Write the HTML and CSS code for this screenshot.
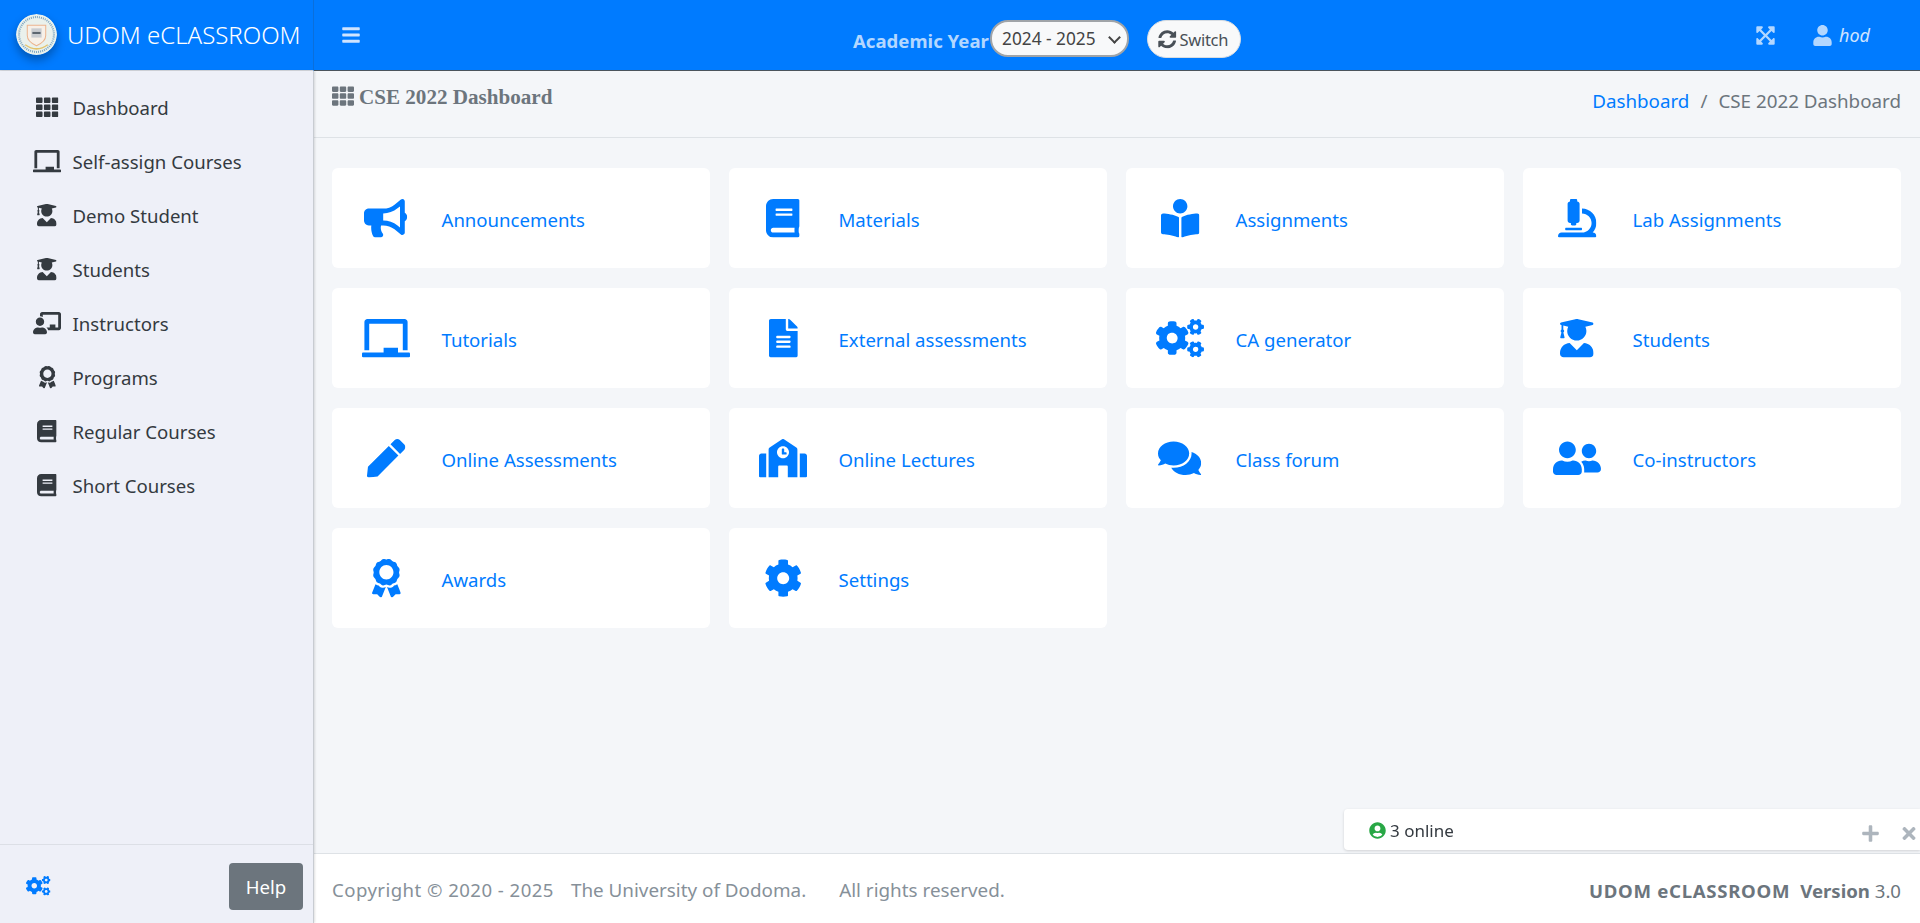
FILE: index.html
```html
<!DOCTYPE html>
<html lang="en">
<head>
<meta charset="utf-8">
<title>UDOM eCLASSROOM</title>
<link rel="stylesheet" href="styles.css">
</head>
<body>
<svg class="defs" aria-hidden="true">
<symbol id="th" viewBox="0 0 512 512"><path d="M149.333 56v80c0 13.255-10.745 24-24 24H24c-13.255 0-24-10.745-24-24V56c0-13.255 10.745-24 24-24h101.333c13.255 0 24 10.745 24 24zm181.334 240v-80c0-13.255-10.745-24-24-24H205.333c-13.255 0-24 10.745-24 24v80c0 13.255 10.745 24 24 24h101.333c13.256 0 24.001-10.745 24.001-24zm32-240v80c0 13.255 10.745 24 24 24H488c13.255 0 24-10.745 24-24V56c0-13.255-10.745-24-24-24H386.667c-13.255 0-24 10.745-24 24zm-32 80V56c0-13.255-10.745-24-24-24H205.333c-13.255 0-24 10.745-24 24v80c0 13.255 10.745 24 24 24h101.333c13.256 0 24.001-10.745 24.001-24zm-205.334 56H24c-13.255 0-24 10.745-24 24v80c0 13.255 10.745 24 24 24h101.333c13.255 0 24-10.745 24-24v-80c0-13.255-10.745-24-24-24zM0 376v80c0 13.255 10.745 24 24 24h101.333c13.255 0 24-10.745 24-24v-80c0-13.255-10.745-24-24-24H24c-13.255 0-24 10.745-24 24zm386.667-56H488c13.255 0 24-10.745 24-24v-80c0-13.255-10.745-24-24-24H386.667c-13.255 0-24 10.745-24 24v80c0 13.255 10.745 24 24 24zm0 160H488c13.255 0 24-10.745 24-24v-80c0-13.255-10.745-24-24-24H386.667c-13.255 0-24 10.745-24 24v80c0 13.255 10.745 24 24 24zM181 376v80c0 13.255 10.745 24 24 24h102c13.255 0 24-10.745 24-24v-80c0-13.255-10.745-24-24-24H205c-13.255 0-24 10.745-24 24z"/></symbol>
<symbol id="bullhorn" viewBox="0 0 576 512"><path d="M576 240c0-23.63-12.95-44.04-32-55.12V32.01C544 23.26 537.02 0 512 0c-7.12 0-14.19 2.38-19.98 7.02l-85.03 68.03C364.28 109.19 310.66 128 256 128H64c-35.35 0-64 28.65-64 64v96c0 35.35 28.65 64 64 64h33.7c-1.39 10.48-2.18 21.14-2.18 32 0 39.77 9.26 77.35 25.56 110.94 5.19 10.69 16.52 17.06 28.4 17.06h74.28c26.05 0 41.69-29.84 25.9-50.56-16.4-21.52-26.15-48.36-26.15-77.44 0-11.11 1.62-21.79 4.41-32H256c54.66 0 108.28 18.81 150.98 52.95l85.03 68.03a32.023 32.023 0 0 0 19.98 7.02c24.92 0 32-22.78 32-32V295.13C563.05 284.04 576 263.63 576 240zm-96 141.42l-33.05-26.44C392.95 311.78 325.12 288 256 288v-96c69.12 0 136.95-23.78 190.95-66.98L480 98.58v282.84z"/></symbol>
<symbol id="book" viewBox="0 0 448 512"><path d="M448 360V24c0-13.3-10.7-24-24-24H96C43 0 0 43 0 96v320c0 53 43 96 96 96h328c13.3 0 24-10.7 24-24v-16c0-7.5-3.5-14.3-8.9-18.7-4.2-15.4-4.2-59.3 0-74.7 5.4-4.3 8.9-11.1 8.9-18.6zM128 134c0-3.3 2.7-6 6-6h212c3.3 0 6 2.7 6 6v20c0 3.3-2.7 6-6 6H134c-3.3 0-6-2.7-6-6v-20zm0 64c0-3.3 2.7-6 6-6h212c3.3 0 6 2.7 6 6v20c0 3.3-2.7 6-6 6H134c-3.3 0-6-2.7-6-6v-20zm253.4 250H96c-17.7 0-32-14.3-32-32 0-17.6 14.4-32 32-32h285.4c-1.9 17.1-1.9 46.9 0 64z"/></symbol>
<symbol id="reader" viewBox="0 0 512 512"><path d="M352 96c0-53.02-42.98-96-96-96s-96 42.98-96 96 42.98 96 96 96 96-42.98 96-96zM233.59 241.1c-59.33-36.32-155.43-46.3-203.79-49.05C13.55 191.13 0 203.51 0 219.14v222.8c0 14.33 11.59 26.28 26.49 27.05 43.66 2.29 131.99 10.68 193.04 41.43 9.37 4.72 20.48-1.71 20.48-11.87V252.56c-.01-4.67-2.32-8.95-6.42-11.46zm248.61-49.05c-48.35 2.74-144.46 12.73-203.78 49.05-4.1 2.51-6.41 6.96-6.41 11.63v245.79c0 10.19 11.14 16.63 20.54 11.9 61.04-30.72 149.32-39.11 192.97-41.4 14.9-.78 26.49-12.73 26.49-27.06V219.14c-.01-15.63-13.56-28.01-29.81-27.09z"/></symbol>
<symbol id="microscope" viewBox="0 0 512 512"><path d="M160 320h12v16c0 8.84 7.16 16 16 16h40c8.84 0 16-7.16 16-16v-16h12c17.67 0 32-14.33 32-32V64c0-17.67-14.33-32-32-32V16c0-8.84-7.16-16-16-16h-64c-8.84 0-16 7.16-16 16v16c-17.67 0-32 14.33-32 32v224c0 17.67 14.33 32 32 32zm304 128h-1.29C493.24 413.99 512 369.2 512 320c0-105.88-86.12-192-192-192v64c70.58 0 128 57.42 128 128s-57.42 128-128 128H48c-26.51 0-48 21.49-48 48 0 8.84 7.16 16 16 16h480c8.84 0 16-7.16 16-16 0-26.51-21.49-48-48-48zm-360-32h208c4.42 0 8-3.58 8-8v-16c0-4.42-3.58-8-8-8H104c-4.42 0-8 3.58-8 8v16c0 4.42 3.58 8 8 8z"/></symbol>
<symbol id="chalkboard" viewBox="0 0 640 512"><path d="M96 64h448v352h64V40c0-22.06-17.94-40-40-40H72C49.94 0 32 17.94 32 40v376h64V64zm528 384H480v-64H288v64H16c-8.84 0-16 7.16-16 16v32c0 8.84 7.16 16 16 16h608c8.84 0 16-7.16 16-16v-32c0-8.84-7.16-16-16-16z"/></symbol>
<symbol id="file" viewBox="0 0 384 512"><path d="M224 136V0H24C10.7 0 0 10.7 0 24v464c0 13.3 10.7 24 24 24h336c13.3 0 24-10.7 24-24V160H248c-13.2 0-24-10.8-24-24zm64 236c0 6.6-5.4 12-12 12H108c-6.6 0-12-5.4-12-12v-8c0-6.6 5.4-12 12-12h168c6.6 0 12 5.4 12 12v8zm0-64c0 6.6-5.4 12-12 12H108c-6.6 0-12-5.4-12-12v-8c0-6.6 5.4-12 12-12h168c6.6 0 12 5.4 12 12v8zm0-72v8c0 6.6-5.4 12-12 12H108c-6.6 0-12-5.4-12-12v-8c0-6.6 5.4-12 12-12h168c6.6 0 12 5.4 12 12zm96-114.1v6.1H256V0h6.1c6.4 0 12.5 2.5 17 7l97.9 98c4.5 4.5 7 10.6 7 16.9z"/></symbol>
<symbol id="cogs" viewBox="0 0 640 512"><path d="M512.1 191l-8.2 14.3c-3 5.3-9.4 7.5-15.1 5.4-11.8-4.4-22.6-10.7-32.1-18.6-4.6-3.8-5.8-10.5-2.8-15.7l8.2-14.3c-6.9-8-12.3-17.3-15.9-27.4h-16.5c-6 0-11.2-4.3-12.2-10.3-2-12-2.1-24.6 0-37.1 1-6 6.2-10.4 12.2-10.4h16.5c3.6-10.1 9-19.4 15.9-27.4l-8.2-14.3c-3-5.2-1.9-11.9 2.8-15.7 9.5-7.9 20.4-14.2 32.1-18.6 5.7-2.1 12.1.1 15.1 5.4l8.2 14.3c10.5-1.9 21.2-1.9 31.7 0L552 6.3c3-5.3 9.4-7.5 15.1-5.4 11.8 4.4 22.6 10.7 32.1 18.6 4.6 3.8 5.8 10.5 2.8 15.7l-8.2 14.3c6.9 8 12.3 17.3 15.9 27.4h16.5c6 0 11.2 4.3 12.2 10.3 2 12 2.1 24.6 0 37.1-1 6-6.2 10.4-12.2 10.4h-16.5c-3.6 10.1-9 19.4-15.9 27.4l8.2 14.3c3 5.2 1.9 11.9-2.8 15.7-9.5 7.9-20.4 14.2-32.1 18.6-5.7 2.1-12.1-.1-15.1-5.4l-8.2-14.3c-10.4 1.9-21.2 1.9-31.7 0zm-10.5-58.8c38.5 29.6 82.4-14.3 52.8-52.8-38.5-29.7-82.4 14.3-52.8 52.8zM386.3 286.1l33.7 16.8c10.1 5.8 14.5 18.1 10.5 29.1-8.9 24.2-26.4 46.4-42.6 65.8-7.4 8.9-20.2 11.1-30.3 5.3l-29.1-16.8c-16 13.7-34.6 24.6-54.9 31.7v33.6c0 11.6-8.3 21.6-19.7 23.6-24.6 4.2-50.4 4.4-75.9 0-11.5-2-20-11.9-20-23.6V418c-20.3-7.2-38.9-18-54.9-31.7L74 403c-10 5.8-22.9 3.6-30.3-5.3-16.2-19.4-33.3-41.6-42.2-65.7-4-10.9.4-23.2 10.5-29.1l33.3-16.8c-3.9-20.9-3.9-42.4 0-63.4L12 205.8c-10.1-5.8-14.6-18.1-10.5-29 8.9-24.2 26-46.4 42.2-65.8 7.4-8.9 20.2-11.1 30.3-5.3l29.1 16.8c16-13.7 34.6-24.6 54.9-31.7V57.1c0-11.5 8.2-21.5 19.6-23.5 24.6-4.2 50.5-4.4 76-.1 11.5 2 20 11.9 20 23.6v33.6c20.3 7.2 38.9 18 54.9 31.7l29.1-16.8c10-5.8 22.9-3.6 30.3 5.3 16.2 19.4 33.2 41.6 42.1 65.8 4 10.9.1 23.2-10 29.1l-33.7 16.8c3.9 21 3.9 42.5 0 63.5zm-117.6 21.1c59.2-77-28.7-164.9-105.7-105.7-59.2 77 28.7 164.9 105.7 105.7zm243.4 182.7l-8.2 14.3c-3 5.3-9.4 7.5-15.1 5.4-11.8-4.4-22.6-10.7-32.1-18.6-4.6-3.8-5.8-10.5-2.8-15.7l8.2-14.3c-6.9-8-12.3-17.3-15.9-27.4h-16.5c-6 0-11.2-4.3-12.2-10.3-2-12-2.1-24.6 0-37.1 1-6 6.2-10.4 12.2-10.4h16.5c3.6-10.1 9-19.4 15.9-27.4l-8.2-14.3c-3-5.2-1.9-11.9 2.8-15.7 9.5-7.9 20.4-14.2 32.1-18.6 5.7-2.1 12.1.1 15.1 5.4l8.2 14.3c10.5-1.9 21.2-1.9 31.7 0l8.2-14.3c3-5.3 9.4-7.5 15.1-5.4 11.8 4.4 22.6 10.7 32.1 18.6 4.6 3.8 5.8 10.5 2.8 15.7l-8.2 14.3c6.9 8 12.3 17.3 15.9 27.4h16.5c6 0 11.2 4.3 12.2 10.3 2 12 2.1 24.6 0 37.1-1 6-6.2 10.4-12.2 10.4h-16.5c-3.6 10.1-9 19.4-15.9 27.4l8.2 14.3c3 5.2 1.9 11.9-2.8 15.7-9.5 7.9-20.4 14.2-32.1 18.6-5.7 2.1-12.1-.1-15.1-5.4l-8.2-14.3c-10.4 1.9-21.2 1.9-31.7 0zM501.6 431c38.5 29.6 82.4-14.3 52.8-52.8-38.5-29.6-82.4 14.3-52.8 52.8z"/></symbol>
<symbol id="graduate" viewBox="0 0 448 512"><path d="M319.4 320.6L224 416l-95.4-95.4C57.1 323.7 0 382.2 0 454.4v9.6c0 26.5 21.5 48 48 48h352c26.5 0 48-21.5 48-48v-9.6c0-72.2-57.1-130.7-128.6-133.8zM13.6 79.8l6.4 1.5v58.4c-7 4.2-12 11.5-12 20.3 0 8.4 4.6 15.4 11.1 19.7L3.5 242c-1.7 6.9 2.1 14 7.6 14h41.8c5.5 0 9.3-7.1 7.6-14l-15.6-62.3C51.4 175.4 56 168.4 56 160c0-8.8-5-16.1-12-20.3V87.1l66 15.9c-8.6 17.2-14 36.4-14 57 0 70.7 57.3 128 128 128s128-57.3 128-128c0-20.6-5.3-39.8-14-57l96.3-23.2c18.2-4.4 18.2-27.1 0-31.5l-190.4-46c-13-3.1-26.7-3.1-39.7 0L13.6 48.2c-18.1 4.4-18.1 27.2 0 31.6z"/></symbol>
<symbol id="pen" viewBox="0 0 512 512"><path d="M290.74 93.24l128.02 128.02-277.99 277.99-114.14 12.6C11.35 513.54-1.56 500.62.14 485.34l12.7-114.22 277.9-277.88zm207.2-19.06l-60.11-60.11c-18.75-18.75-49.16-18.75-67.91 0l-56.55 56.55 128.02 128.02 56.55-56.55c18.75-18.76 18.75-49.16 0-67.91z"/></symbol>
<symbol id="school" viewBox="0 0 640 512"><path d="M0 224v272c0 8.84 7.16 16 16 16h80V192H32c-17.67 0-32 14.33-32 32zm360-48h-24v-40c0-4.42-3.58-8-8-8h-16c-4.42 0-8 3.58-8 8v64c0 4.42 3.58 8 8 8h48c4.42 0 8-3.58 8-8v-16c0-4.42-3.58-8-8-8zm137.75-63.96l-160-106.67a32.02 32.02 0 0 0-35.5 0l-160 106.67A32.002 32.002 0 0 0 128 138.66V512h128V368c0-8.84 7.16-16 16-16h96c8.84 0 16 7.16 16 16v144h128V138.67c0-10.7-5.35-20.7-14.25-26.63zM320 256c-44.18 0-80-35.82-80-80s35.82-80 80-80 80 35.82 80 80-35.82 80-80 80zm288-64h-64v320h80c8.84 0 16-7.16 16-16V224c0-17.67-14.33-32-32-32z"/></symbol>
<symbol id="comments" viewBox="0 0 576 512"><path d="M416 192c0-88.4-93.1-160-208-160S0 103.6 0 192c0 34.3 14.1 65.9 38 92-13.4 30.2-35.5 54.2-35.8 54.5-2.2 2.3-2.8 5.7-1.5 8.7S4.8 352 8 352c36.6 0 66.9-12.3 88.7-25 32.2 15.7 70.3 25 111.3 25 114.9 0 208-71.6 208-160zm122 220c23.9-26 38-57.7 38-92 0-66.9-53.5-124.2-129.3-148.1.9 6.6 1.3 13.3 1.3 20.1 0 105.9-107.7 192-240 192-10.8 0-21.3-.8-31.7-1.9C207.8 439.6 281.8 480 368 480c41 0 79.1-9.2 111.3-25 21.8 12.7 52.1 25 88.7 25 3.2 0 6.1-1.9 7.3-4.8 1.3-2.9.7-6.3-1.5-8.7-.3-.3-22.4-24.2-35.8-54.5z"/></symbol>
<symbol id="friends" viewBox="0 0 640 512"><path d="M192 256c61.9 0 112-50.1 112-112S253.9 32 192 32 80 82.1 80 144s50.1 112 112 112zm76.8 32h-8.3c-20.8 10-43.9 16-68.5 16s-47.6-6-68.5-16h-8.3C51.6 288 0 339.6 0 403.2V432c0 26.5 21.5 48 48 48h288c26.5 0 48-21.5 48-48v-28.8c0-63.6-51.6-115.2-115.2-115.2zM480 256c53 0 96-43 96-96s-43-96-96-96-96 43-96 96 43 96 96 96zm48 32h-3.8c-13.9 4.8-28.6 8-44.2 8s-30.3-3.2-44.2-8H432c-20.4 0-39.2 5.9-55.7 15.4 24.4 26.3 39.7 61.2 39.7 99.8v38.4c0 2.2-.5 4.3-.6 6.4H592c26.5 0 48-21.5 48-48 0-61.9-50.1-112-112-112z"/></symbol>
<symbol id="award" viewBox="0 0 384 512"><path d="M97.12 362.63c-8.69-8.69-4.16-6.24-25.12-11.85-9.51-2.55-17.87-7.45-25.43-13.32L1.2 448.7c-4.39 10.77 3.81 22.47 15.43 22.03l52.69-2.01L105.56 507c8 8.44 22.04 5.81 26.43-4.96l52.05-127.62c-10.84 6.04-22.87 9.58-35.31 9.58-19.5 0-37.82-7.59-51.61-21.37zM382.8 448.7l-45.37-111.24c-7.56 5.88-15.92 10.77-25.43 13.32-21.07 5.64-16.45 3.18-25.12 11.85-13.79 13.78-32.12 21.37-51.62 21.37-12.44 0-24.47-3.55-35.31-9.58L252 502.04c4.39 10.77 18.44 13.4 26.43 4.96l36.25-38.28 52.69 2.01c11.62.44 19.82-11.27 15.43-22.03zM263 340c15.28-15.55 17.03-14.21 38.79-20.14 13.89-3.79 24.75-14.84 28.47-28.98 7.48-28.4 5.54-24.97 25.95-45.75 10.17-10.35 14.14-25.44 10.42-39.58-7.47-28.38-7.48-24.42 0-52.83 3.72-14.14-.25-29.23-10.42-39.58-20.41-20.78-18.47-17.36-25.95-45.75-3.72-14.14-14.58-25.19-28.47-28.98-27.88-7.61-24.52-5.62-44.95-26.41-10.17-10.35-25-14.4-38.89-10.61-27.87 7.6-23.98 7.61-51.9 0-13.89-3.79-28.72.25-38.89 10.61-20.41 20.78-17.05 18.8-44.94 26.41-13.89 3.79-24.75 14.84-28.47 28.98-7.47 28.39-5.54 24.97-25.95 45.75-10.17 10.35-14.15 25.44-10.42 39.58 7.47 28.36 7.48 24.4 0 52.82-3.72 14.14.25 29.23 10.42 39.59 20.41 20.78 18.47 17.35 25.95 45.75 3.72 14.14 14.58 25.19 28.47 28.98C104.6 325.96 106.27 325 121 340c13.23 13.47 33.84 15.88 49.74 5.82a39.676 39.676 0 0 1 42.53 0c15.89 10.06 36.5 7.65 49.73-5.82zM97.66 175.96c0-53.03 42.24-96.02 94.34-96.02s94.34 42.99 94.34 96.02-42.24 96.02-94.34 96.02-94.34-42.99-94.34-96.02z"/></symbol>
<symbol id="cog" viewBox="0 0 512 512"><path d="M487.4 315.7l-42.6-24.6c4.3-23.2 4.3-47 0-70.2l42.6-24.6c4.9-2.8 7.1-8.6 5.5-14-11.1-35.6-30-67.8-54.7-94.6-3.8-4.1-10-5.1-14.8-2.3L380.8 110c-17.9-15.4-38.5-27.3-60.8-35.1V25.8c0-5.6-3.9-10.5-9.4-11.7-36.7-8.2-74.3-7.8-109.2 0-5.5 1.2-9.4 6.1-9.4 11.7V75c-22.2 7.9-42.8 19.8-60.8 35.1L88.7 85.5c-4.9-2.8-11-1.9-14.8 2.3-24.7 26.7-43.6 58.9-54.7 94.6-1.7 5.4.6 11.2 5.5 14L67.3 221c-4.3 23.2-4.3 47 0 70.2l-42.6 24.6c-4.9 2.8-7.1 8.6-5.5 14 11.1 35.6 30 67.8 54.7 94.6 3.8 4.1 10 5.1 14.8 2.3l42.6-24.6c17.9 15.4 38.5 27.3 60.8 35.1v49.2c0 5.6 3.9 10.5 9.4 11.7 36.7 8.2 74.3 7.8 109.2 0 5.5-1.2 9.4-6.1 9.4-11.7v-49.2c22.2-7.9 42.8-19.8 60.8-35.1l42.6 24.6c4.9 2.8 11 1.9 14.8-2.3 24.7-26.7 43.6-58.9 54.7-94.6 1.5-5.5-.7-11.3-5.6-14.1zM256 336c-44.1 0-80-35.9-80-80s35.9-80 80-80 80 35.9 80 80-35.9 80-80 80z"/></symbol>
<symbol id="bars" viewBox="0 0 448 512"><path d="M16 132h416c8.837 0 16-7.163 16-16V76c0-8.837-7.163-16-16-16H16C7.163 60 0 67.163 0 76v40c0 8.837 7.163 16 16 16zm0 160h416c8.837 0 16-7.163 16-16v-40c0-8.837-7.163-16-16-16H16c-8.837 0-16 7.163-16 16v40c0 8.837 7.163 16 16 16zm0 160h416c8.837 0 16-7.163 16-16v-40c0-8.837-7.163-16-16-16H16c-8.837 0-16 7.163-16 16v40c0 8.837 7.163 16 16 16z"/></symbol>
<symbol id="expand" viewBox="0 0 448 512"><path d="M448 344v112a23.94 23.94 0 0 1-24 24H312c-21.39 0-32.09-25.9-17-41l36.2-36.2L224 295.6 116.77 402.9 153 439c15.09 15.1 4.39 41-17 41H24a23.94 23.94 0 0 1-24-24V344c0-21.4 25.89-32.1 41-17l36.19 36.2L184.46 256 77.18 148.7 41 185c-15.1 15.1-41 4.4-41-17V56a23.94 23.94 0 0 1 24-24h112c21.39 0 32.09 25.9 17 41l-36.2 36.2L224 216.4l107.23-107.3L295 73c-15.09-15.1-4.39-41 17-41h112a23.94 23.94 0 0 1 24 24v112c0 21.4-25.89 32.1-41 17l-36.19-36.2L263.54 256l107.28 107.3L407 327.1c15.1-15.2 41-4.5 41 16.9z"/></symbol>
<symbol id="user" viewBox="0 0 448 512"><path d="M224 256c70.7 0 128-57.3 128-128S294.7 0 224 0 96 57.3 96 128s57.3 128 128 128zm89.6 32h-16.7c-22.2 10.2-46.9 16-72.9 16s-50.6-5.8-72.9-16h-16.7C60.2 288 0 348.2 0 422.4V464c0 26.5 21.5 48 48 48h352c26.5 0 48-21.5 48-48v-41.6c0-74.2-60.2-134.4-134.4-134.4z"/></symbol>
<symbol id="sync" viewBox="0 0 512 512"><path d="M370.72 133.28C339.458 104.008 298.888 87.962 255.848 88c-77.458.068-144.328 53.178-162.791 126.85-1.344 5.363-6.122 9.15-11.651 9.15H24.103c-7.498 0-13.194-6.807-11.807-14.176C33.933 94.924 134.813 8 256 8c66.448 0 126.791 26.136 171.315 68.685L463.03 40.97C478.149 25.851 504 36.559 504 57.941V192c0 13.255-10.745 24-24 24H345.941c-21.382 0-32.09-25.851-16.971-40.971l41.75-41.749zM32 296h134.059c21.382 0 32.09 25.851 16.971 40.971l-41.75 41.75c31.262 29.273 71.835 45.319 114.876 45.28 77.418-.07 144.315-53.144 162.787-126.849 1.344-5.363 6.122-9.15 11.651-9.15h57.304c7.498 0 13.194 6.807 11.807 14.176C478.067 417.076 377.187 504 256 504c-66.448 0-126.791-26.136-171.315-68.685L48.97 471.03C33.851 486.149 8 475.441 8 454.059V320c0-13.255 10.745-24 24-24z"/></symbol>
<symbol id="teacher" viewBox="0 0 640 512"><path d="M208 352c-2.39 0-4.78.35-7.06 1.09C187.98 357.3 174.35 360 160 360c-14.35 0-27.98-2.7-40.95-6.91-2.28-.74-4.66-1.09-7.05-1.09C49.94 352-.33 402.48 0 464.62.14 490.88 21.73 512 48 512h224c26.27 0 47.86-21.12 48-47.38.33-62.14-49.94-112.62-112-112.62zm-48-32c53.02 0 96-42.98 96-96s-42.98-96-96-96-96 42.98-96 96 42.98 96 96 96zM592 0H208c-26.47 0-48 22.25-48 49.59V96c23.42 0 45.1 6.78 64 17.8V64h352v288h-64v-64H384v64h-76.24c19.1 16.69 33.12 38.73 39.69 64H592c26.47 0 48-22.25 48-49.59V49.59C640 22.25 618.47 0 592 0z"/></symbol>
<symbol id="usercircle" viewBox="0 0 496 512"><path d="M248 8C111 8 0 119 0 256s111 248 248 248 248-111 248-248S385 8 248 8zm0 96c48.6 0 88 39.4 88 88s-39.4 88-88 88-88-39.4-88-88 39.4-88 88-88zm0 344c-58.7 0-111.3-26.6-146.5-68.2 18.8-35.4 55.6-59.8 98.5-59.8 2.4 0 4.8.4 7.1 1.1 13 4.2 26.6 6.9 40.9 6.9 14.3 0 28-2.7 40.9-6.9 2.3-.7 4.7-1.1 7.1-1.1 42.9 0 79.7 24.4 98.5 59.8C359.3 421.4 306.7 448 248 448z"/></symbol>
<symbol id="plus" viewBox="0 0 448 512"><path d="M416 208H272V64c0-17.67-14.33-32-32-32h-32c-17.67 0-32 14.33-32 32v144H32c-17.67 0-32 14.33-32 32v32c0 17.67 14.33 32 32 32h144v144c0 17.67 14.33 32 32 32h32c17.67 0 32-14.33 32-32V304h144c17.67 0 32-14.33 32-32v-32c0-17.67-14.33-32-32-32z"/></symbol>
<symbol id="times" viewBox="0 0 352 512"><path d="M242.72 256l100.07-100.07c12.28-12.28 12.28-32.19 0-44.48l-22.24-22.24c-12.28-12.28-32.19-12.28-44.48 0L176 189.28 75.93 89.21c-12.28-12.28-32.19-12.28-44.48 0L9.21 111.45c-12.28 12.28-12.28 32.19 0 44.48L109.28 256 9.21 356.07c-12.28 12.28-12.28 32.19 0 44.48l22.24 22.24c12.28 12.28 32.2 12.28 44.48 0L176 322.72l100.07 100.07c12.28 12.28 32.2 12.28 44.48 0l22.24-22.24c12.28-12.28 12.28-32.19 0-44.48L242.72 256z"/></symbol>
</svg>

<div class="app">
  <a class="brand" href="#">
    <svg class="logo" viewBox="0 0 40 40" aria-hidden="true">
      <circle cx="20" cy="20" r="20" fill="#eaf1ec"/>
      <circle cx="20" cy="20" r="17" fill="none" stroke="#7fa8c4" stroke-width="2" stroke-dasharray="1 1"/>
      <path d="M11 11h18v10c0 5-4.500 8-9 10-4.500-2-9-5-9-10z" fill="#f7f0e8" stroke="#ecb48e" stroke-width="1"/>
      <rect x="15" y="14" width="10" height="9" fill="#c9ccd0"/>
      <rect x="16" y="17.500" width="8" height="2" fill="#5c6670"/>
      <path d="M9 30q11 8 22 0" fill="none" stroke="#e3c36d" stroke-width="1.500"/>
    </svg>
    <span class="brand-text">UDOM eCLASSROOM</span>
  </a>

  <header class="topbar">
    <a class="menu-toggle" href="#"><svg class="fa"><use href="#bars"/></svg></a>
    <form class="year-form">
      <label class="year-label" for="year">Academic Year</label>
      <span class="select-wrap"><select class="year-select" id="year"><option>2024 - 2025</option></select></span>
      <button class="switch-btn" type="button"><svg class="fa"><use href="#sync"/></svg>Switch</button>
    </form>
    <div class="top-right">
      <a class="expand" href="#"><svg class="fa"><use href="#expand"/></svg></a>
      <a class="user" href="#"><svg class="fa"><use href="#user"/></svg><em>hod</em></a>
    </div>
  </header>

  <aside class="sidebar">
    <nav class="side-nav">
      <a class="side-link" href="#"><span class="side-icon"><svg class="fa w512"><use href="#th"/></svg></span>Dashboard</a>
      <a class="side-link" href="#"><span class="side-icon"><svg class="fa w640"><use href="#chalkboard"/></svg></span>Self-assign Courses</a>
      <a class="side-link" href="#"><span class="side-icon"><svg class="fa w448"><use href="#graduate"/></svg></span>Demo Student</a>
      <a class="side-link" href="#"><span class="side-icon"><svg class="fa w448"><use href="#graduate"/></svg></span>Students</a>
      <a class="side-link" href="#"><span class="side-icon"><svg class="fa w640"><use href="#teacher"/></svg></span>Instructors</a>
      <a class="side-link" href="#"><span class="side-icon"><svg class="fa w384"><use href="#award"/></svg></span>Programs</a>
      <a class="side-link" href="#"><span class="side-icon"><svg class="fa w448"><use href="#book"/></svg></span>Regular Courses</a>
      <a class="side-link" href="#"><span class="side-icon"><svg class="fa w448"><use href="#book"/></svg></span>Short Courses</a>
    </nav>
    <div class="side-foot">
      <a class="side-cogs" href="#"><svg class="fa"><use href="#cogs"/></svg></a>
      <a class="help-btn" href="#">Help</a>
    </div>
  </aside>

  <main class="main">
    <div class="page-head">
      <h1 class="page-title"><svg class="fa"><use href="#th"/></svg>CSE 2022 Dashboard</h1>
      <ol class="crumbs">
        <li><a href="#">Dashboard</a></li>
        <li class="crumb-sep">/</li>
        <li class="crumb-now">CSE 2022 Dashboard</li>
      </ol>
    </div>
    <section class="cards">
      <a class="card" href="#"><span class="card-icon"><svg class="fa w576"><use href="#bullhorn"/></svg></span><span class="card-label">Announcements</span></a>
      <a class="card" href="#"><span class="card-icon"><svg class="fa w448"><use href="#book"/></svg></span><span class="card-label">Materials</span></a>
      <a class="card" href="#"><span class="card-icon"><svg class="fa w512"><use href="#reader"/></svg></span><span class="card-label">Assignments</span></a>
      <a class="card" href="#"><span class="card-icon"><svg class="fa w512"><use href="#microscope"/></svg></span><span class="card-label">Lab Assignments</span></a>
      <a class="card" href="#"><span class="card-icon"><svg class="fa w640"><use href="#chalkboard"/></svg></span><span class="card-label">Tutorials</span></a>
      <a class="card" href="#"><span class="card-icon"><svg class="fa w384"><use href="#file"/></svg></span><span class="card-label">External assessments</span></a>
      <a class="card" href="#"><span class="card-icon"><svg class="fa w640"><use href="#cogs"/></svg></span><span class="card-label">CA generator</span></a>
      <a class="card" href="#"><span class="card-icon"><svg class="fa w448"><use href="#graduate"/></svg></span><span class="card-label">Students</span></a>
      <a class="card" href="#"><span class="card-icon"><svg class="fa w512"><use href="#pen"/></svg></span><span class="card-label">Online Assessments</span></a>
      <a class="card" href="#"><span class="card-icon"><svg class="fa w640"><use href="#school"/></svg></span><span class="card-label">Online Lectures</span></a>
      <a class="card" href="#"><span class="card-icon"><svg class="fa w576"><use href="#comments"/></svg></span><span class="card-label">Class forum</span></a>
      <a class="card" href="#"><span class="card-icon"><svg class="fa w640"><use href="#friends"/></svg></span><span class="card-label">Co-instructors</span></a>
      <a class="card" href="#"><span class="card-icon"><svg class="fa w384"><use href="#award"/></svg></span><span class="card-label">Awards</span></a>
      <a class="card" href="#"><span class="card-icon"><svg class="fa w512"><use href="#cog"/></svg></span><span class="card-label">Settings</span></a>
    </section>
    <footer class="footer">
      <p class="copy"><span class="copy-years">Copyright © 2020 - 2025</span><span class="copy-part">The University of Dodoma.</span><span class="copy-part copy-last">All rights reserved.</span></p>
      <p class="version"><b class="ver-brand">UDOM eCLASSROOM</b><b>Version</b> 3.0</p>
    </footer>
  </main>
</div>

<div class="chat">
  <svg class="fa chat-dot"><use href="#usercircle"/></svg>
  <span class="chat-text">3 online</span>
  <svg class="fa chat-plus"><use href="#plus"/></svg>
  <svg class="fa chat-close"><use href="#times"/></svg>
</div>
</body>
</html>
```

FILE: styles.css
```css
* { box-sizing: border-box; }
html, body { margin: 0; height: 100%; }
body {
  overflow: hidden;
  font-family: "Noto Sans", "Open Sans", sans-serif;
  font-size: 18.6px;
  color: #343a40;
  background: #f4f6f9;
}
a { text-decoration: none; color: inherit; }
.defs { display: none; }
.fa { display: block; width: 1em; height: 1em; fill: currentColor; overflow: visible; }

.app {
  display: grid;
  grid-template-columns: 314px 1fr;
  grid-template-rows: 71px 852px;
  height: 923px;
}

/* brand + top bar */
.brand {
  display: flex;
  align-items: center;
  padding: 0 0 1px 16px;
  background: #007bff;
  border-right: 1px solid #0a6fdb;
  border-bottom: 1px solid #d5d8de;
  color: #fff;
}
.logo {
  width: 41px;
  height: 41px;
  border-radius: 50%;
  box-shadow: 0 5px 10px rgba(0, 0, 0, .3);
}
.brand-text {
  margin-left: 10px;
  font-size: 24px;
  font-weight: 300;
  white-space: nowrap;
}
.topbar {
  display: flex;
  align-items: center;
  background: #007bff;
  border-bottom: 1px solid #4b545c;
  color: #fff;
}
.menu-toggle { margin-left: 27px; font-size: 20px; color: #cfe4ff; }
.year-form {
  display: flex;
  align-items: center;
  margin-left: 492px;
  padding-top: 7px;
}
.year-label {
  width: 137px;
  padding-top: 3px;
  font-size: 18.6px;
  font-weight: 700;
  color: #b3d7ff;
  white-space: nowrap;
}
.select-wrap { position: relative; display: block; }
.select-wrap::after {
  content: "";
  position: absolute;
  right: 10px;
  top: 13px;
  width: 7px;
  height: 7px;
  border-right: 2px solid #444;
  border-bottom: 2px solid #444;
  transform: rotate(45deg);
  pointer-events: none;
}
.year-select {
  display: block;
  width: 139px;
  height: 37px;
  padding: 0 0 0 10px;
  border: 2px solid #a0a4a8;
  border-radius: 18px;
  background: #f8f9fa;
  color: #444;
  font: 17.3px "Noto Sans", sans-serif;
  appearance: none;
  -webkit-appearance: none;
}
.switch-btn {
  display: flex;
  align-items: center;
  width: 94px;
  height: 38px;
  margin-left: 18px;
  padding: 2px 0 0 10px;
  border: 1px solid #d8dde2;
  border-radius: 19px;
  background: #f8f9fa;
  color: #495057;
  font: 16.5px "Noto Sans", sans-serif;
  letter-spacing: -.3px;
}
.switch-btn .fa { margin-right: 3px; font-size: 18.5px; }
.top-right {
  display: flex;
  align-items: center;
  margin-left: auto;
  padding-right: 50px;
  color: #b3d7ff;
}
.expand { font-size: 21px; }
.user { display: flex; align-items: center; margin-left: 36px; font-size: 21px; }
.user em { margin-left: 6px; font-size: 18px; color: #cfe4ff; }

/* sidebar */
.sidebar {
  display: flex;
  flex-direction: column;
  background: #eef0f8;
  border-right: 1px solid #c8ccd2;
  box-shadow: 1px 0 2px rgba(0, 0, 0, .12);
  z-index: 1;
}
.side-nav { display: flex; flex-direction: column; padding-top: 9px; flex: 1; }
.side-link {
  display: flex;
  align-items: center;
  height: 54px;
  padding-left: 32px;
  color: #343a40;
}
.side-icon {
  display: flex;
  justify-content: center;
  width: 30px;
  margin-right: 10.5px;
  font-size: 22.4px;
}
.fa.w640 { width: 1.25em; }
.fa.w576 { width: 1.125em; }
.fa.w512 { width: 1em; }
.fa.w448 { width: .875em; }
.fa.w384 { width: .75em; }
.side-foot {
  display: flex;
  align-items: center;
  justify-content: space-between;
  height: 79px;
  padding: 4px 10px 0 26px;
  border-top: 1px solid #dcdfe6;
}
.side-cogs { font-size: 19.6px; color: #007bff; }
.side-cogs .fa { width: 1.25em; }
.help-btn {
  display: flex;
  align-items: center;
  justify-content: center;
  width: 74px;
  height: 47px;
  border-radius: 4px;
  background: #6c757d;
  color: #fff;
}

/* main */
.main { display: flex; flex-direction: column; min-width: 0; }
.page-head {
  display: flex;
  justify-content: space-between;
  height: 67px;
  padding: 14px 19px 0 18px;
  border-bottom: 1px solid #dee2e6;
}
.page-title {
  display: flex;
  align-items: flex-start;
  margin: 0;
  font: 700 21.1px "Liberation Serif", serif;
  color: #6c757d;
}
.page-title .fa { width: 22px; height: 22px; margin-right: 5px; }
.crumbs {
  display: flex;
  margin: 3px 0 0;
  padding: 0;
  list-style: none;
  font-size: 18.8px;
}
.crumbs a { color: #007bff; }
.crumb-sep { margin: 0 11px; color: #6c757d; }
.crumb-now { color: #6c757d; }

.cards {
  display: grid;
  grid-template-columns: repeat(4, 378px);
  grid-auto-rows: 100px;
  gap: 20px 19px;
  padding: 30px 0 0 18px;
  flex: 1;
}
.card {
  display: flex;
  align-items: center;
  padding-left: 10px;
  background: #fff;
  border-radius: 6px;
  color: #007bff;
}
.card-icon {
  display: flex;
  justify-content: center;
  width: 88px;
  margin-right: 11.5px;
  font-size: 38.4px;
}
.card-label { padding-top: 2px; }

.footer {
  display: flex;
  align-items: center;
  justify-content: space-between;
  height: 70px;
  padding: 3px 19px 0 18px;
  background: #fff;
  border-top: 1px solid #dee2e6;
  color: #869099;
}
.copy, .version { margin: 0; }
.copy-years { letter-spacing: .45px; }
.copy-part { margin-left: 17px; font-size: 18.85px; }
.copy-last { margin-left: 33px; }
.version { color: #6c757d; }
.ver-brand { letter-spacing: .7px; }
.version b + b { margin-left: 10px; }

/* chat widget */
.chat {
  position: fixed;
  right: 0;
  top: 809px;
  display: flex;
  align-items: center;
  width: 576px;
  height: 41px;
  padding: 1px 0 0 25px;
  background: #fff;
  box-shadow: 0 1px 3px rgba(0, 0, 0, .15);
  border-radius: 4px 0 0 4px;
  font-size: 17px;
  color: #343a40;
}
.chat-dot { width: 17px; height: 17px; color: #28a745; margin-right: 4px; }
.chat-plus { position: absolute; left: 518px; top: 15px; width: 17px; height: 19px; color: #adb5bd; }
.chat-close { position: absolute; left: 558px; top: 15px; width: 14px; height: 19px; color: #adb5bd; }
```
